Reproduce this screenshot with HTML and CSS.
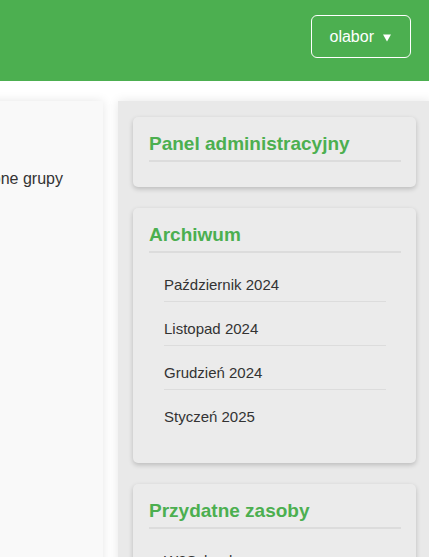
FILE: index.html
```html
<!DOCTYPE html>
<html lang="pl">
<head>
<meta charset="utf-8">
<title>Grupy</title>
<link rel="stylesheet" href="styles.css">
</head>
<body>
<header class="topbar">
  <button class="user-btn" type="button">olabor <svg class="caret" width="8" height="8" viewBox="0 0 8 8"><path d="M0 0.5H8L4 7.5Z" fill="#fff"/></svg></button>
</header>
<main class="layout">
  <section class="content-card">
    <p class="content-text">Dostępne grupy</p>
  </section>
  <aside class="sidebar">
    <div class="widget">
      <h3 class="widget-title">Panel administracyjny</h3>
      <ul class="widget-list"></ul>
    </div>
    <div class="widget">
      <h3 class="widget-title">Archiwum</h3>
      <ul class="widget-list filled">
        <li>Październik 2024</li>
        <li>Listopad 2024</li>
        <li>Grudzień 2024</li>
        <li>Styczeń 2025</li>
      </ul>
    </div>
    <div class="widget">
      <h3 class="widget-title">Przydatne zasoby</h3>
      <ul class="widget-list filled">
        <li>W3Schools</li>
        <li>MDN Web Docs</li>
        <li>Stack Overflow</li>
      </ul>
    </div>
  </aside>
</main>
</body>
</html>
```
FILE: styles.css
```css
html, body {
  margin: 0;
  padding: 0;
  overflow: hidden;
  background: #fff;
}
body {
  font-family: "Liberation Sans", Arial, sans-serif;
  color: #333;
}
.topbar {
  height: 81px;
  box-sizing: border-box;
  background: #4caf50;
  display: flex;
  justify-content: flex-end;
  align-items: flex-start;
  padding: 15px 18px 0 0;
}
.user-btn {
  font-family: "Liberation Sans", Arial, sans-serif;
  font-size: 16px;
  line-height: 18px;
  color: #fff;
  background: transparent;
  border: 1px solid #fff;
  border-radius: 6px;
  padding: 12px 19px 11px 18px;
  display: flex;
  align-items: center;
  gap: 9px;
  cursor: pointer;
}
.caret {
  display: block;
  margin-top: 1px;
}
.layout {
  display: flex;
  gap: 15px;
  margin: 20px 0 0 -70px;
  align-items: stretch;
}
.content-card {
  flex: 0 0 173px;
  box-sizing: border-box;
  background: #f9f9f9;
  box-shadow: 0 0 10px rgba(0, 0, 0, 0.1);
  padding: 69px 20px 20px;
}
.content-text {
  margin: 0;
  font-size: 16px;
  white-space: nowrap;
}
.sidebar {
  flex: 0 0 313px;
  box-sizing: border-box;
  background: #e9e9e9;
  box-shadow: 0 0 10px rgba(0, 0, 0, 0.1);
  padding: 16px 15px 20px;
}
.widget {
  background: #ebebeb;
  border-radius: 5px;
  box-shadow: 0 2px 5px rgba(0, 0, 0, 0.2);
  padding: 15px 15px 15px 16px;
  margin-bottom: 21px;
}
.widget-title {
  margin: 0;
  font-size: 19px;
  line-height: 23px;
  font-weight: bold;
  color: #4caf50;
  padding-bottom: 5px;
  border-bottom: 2px solid #dcdcdc;
}
.widget-list {
  list-style: none;
  margin: 10px 0;
  padding: 0 15px;
}
.widget-list.filled {
  margin-top: 12px;
  margin-bottom: 15px;
}
.widget-list li {
  font-size: 15px;
  line-height: 24px;
  padding: 8px 0 4px;
  margin-bottom: 7px;
  border-bottom: 1px solid #dcdcdc;
}
.widget-list li:last-child {
  border-bottom: none;
}
```
